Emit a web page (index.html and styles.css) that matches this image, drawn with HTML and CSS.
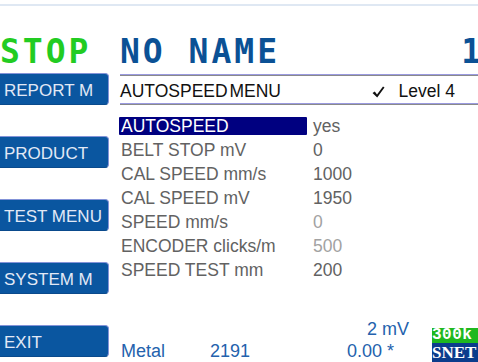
FILE: index.html
```html
<!DOCTYPE html>
<html lang="en">
<head>
    <meta charset="UTF-8">
    <meta name="viewport" content="width=device-width, initial-scale=1.0">
    <title>Autospeed Menu</title>
    <link rel="stylesheet" href="styles.css">
</head>
<body>
    <div class="topline"></div>

    <header class="title">
        <span class="state">STOP</span>
        <span class="name">NO NAME</span>
        <span class="count">1</span>
    </header>

    <div class="screen">
        <nav class="side">
            <button class="key">REPORT M</button>
            <button class="key">PRODUCT</button>
            <button class="key">TEST MENU</button>
            <button class="key">SYSTEM M</button>
            <button class="key">EXIT</button>
        </nav>

        <main class="panel">
            <div class="menu-head">
                <span class="menu-title">AUTOSPEED MENU</span>
                <span class="level">
                    <svg class="tick" width="13" height="12" viewBox="0 0 13 12">
                        <path d="M0.5 7 L2.8 5.6 L5 8.6 L11 0.5 L12.5 1.6 L5.2 11.5 Z" fill="#111"/>
                    </svg>
                    Level 4
                </span>
            </div>

            <ul class="params">
                <li><span class="label selected">AUTOSPEED</span><span class="value">yes</span></li>
                <li><span class="label">BELT STOP mV</span><span class="value">0</span></li>
                <li><span class="label">CAL SPEED mm/s</span><span class="value">1000</span></li>
                <li><span class="label">CAL SPEED mV</span><span class="value">1950</span></li>
                <li><span class="label">SPEED mm/s</span><span class="value readonly">0</span></li>
                <li><span class="label">ENCODER clicks/m</span><span class="value readonly">500</span></li>
                <li><span class="label">SPEED TEST mm</span><span class="value">200</span></li>
            </ul>

            <footer class="status">
                <span class="signal">2 mV</span>
                <div class="logo">
                    <div class="logo-top">300k</div>
                    <div class="logo-bottom">SNET</div>
                </div>
                <span class="metal">Metal</span>
                <span class="reading">2191</span>
                <span class="phase">0.00 *</span>
            </footer>
        </main>
    </div>
</body>
</html>
```

FILE: styles.css
```css
body {
    margin: 0;
    width: 478px;
    height: 362px;
    overflow: hidden;
    background: #fff;
    font-family: "Liberation Sans", Arial, sans-serif;
}
.topline {
    height: 4px;
    border-bottom: 2px solid #dfe8f3;
}

/* big status line */
.title {
    display: flex;
    padding-top: 29px;
    line-height: 33px;
    height: 33px;
    font-family: "DejaVu Sans Mono", monospace;
    font-weight: bold;
    font-size: 33px;
    letter-spacing: 3px;
    white-space: nowrap;
}
.state {
    color: #22cc22;
    width: 120px;
}
.name {
    color: #0b5195;
}
.count {
    color: #0b5195;
    margin-left: auto;
    margin-right: -6px;
}

.screen {
    display: flex;
    gap: 10px;
}

/* soft keys */
.side {
    width: 109px;
    display: flex;
    flex-direction: column;
    gap: 31px;
    padding-top: 5px;
}
.key {
    box-sizing: border-box;
    height: 32px;
    width: 109px;
    padding: 3px 0 0 4px;
    line-height: 27px;
    text-align: left;
    font-family: "Liberation Sans", Arial, sans-serif;
    font-size: 17px;
    color: #e2e9f6;
    background: #0a56a0;
    border: 1px solid #8393d8;
    border-left: none;
    border-bottom-color: #0a4a8c;
    border-radius: 0 4px 4px 0;
    white-space: nowrap;
}

/* menu */
.panel {
    flex: 1;
    padding-top: 6px;
}
.menu-head {
    display: flex;
    margin-left: 1px;
    height: 23px;
    padding-top: 5px;
    line-height: 23px;
    font-size: 17.5px;
    color: #111;
    border-top: 1px solid #9a9ae0;
    border-bottom: 1px solid #9a9ae0;
    box-shadow: inset 0 1px 0 #8a8a8a, 0 1px 0 #8a8a8a;
    white-space: nowrap;
}
.menu-title {
    word-spacing: -3px;
}
.level {
    margin-left: auto;
    padding-right: 23px;
}
.tick {
    margin-right: 9px;
    vertical-align: -1px;
}

.params {
    list-style: none;
    margin: 10px 0 0;
    padding: 0;
    font-size: 17.5px;
    color: #626262;
}
.params li {
    height: 24px;
    display: flex;
    align-items: center;
    white-space: nowrap;
}
.label {
    box-sizing: border-box;
    width: 188px;
    height: 18px;
    line-height: 18px;
    padding-left: 2px;
}
.selected {
    background: #000080;
    color: #fff;
    border-radius: 1px;
}
.value {
    margin-left: 6px;
}
.readonly {
    color: #a2a2a2;
}

/* bottom readout */
.status {
    margin-top: 36px;
    display: grid;
    grid-template-columns: 91px 137px 85px 46px;
    grid-template-rows: 22px 22px;
    line-height: 22px;
    font-size: 18px;
    color: #2462ad;
    white-space: nowrap;
}
.signal {
    grid-column: 3;
    grid-row: 1;
    padding-left: 20px;
}
.metal {
    grid-column: 1;
    grid-row: 2;
    padding-left: 2px;
}
.reading {
    grid-column: 2;
    grid-row: 2;
}
.phase {
    grid-column: 3;
    grid-row: 2;
}
.logo {
    grid-column: 4;
    grid-row: 1 / 3;
    align-self: end;
    height: 34px;
    color: #fff;
    font-weight: bold;
}
.logo-top {
    height: 15px;
    line-height: 15px;
    background: #1fb81f;
    font-family: "Liberation Mono", monospace;
    font-size: 16px;
    letter-spacing: 0.5px;
}
.logo-bottom {
    height: 19px;
    line-height: 20px;
    background: #0b3c8c;
    font-family: "Liberation Serif", serif;
    font-size: 17px;
}
```
